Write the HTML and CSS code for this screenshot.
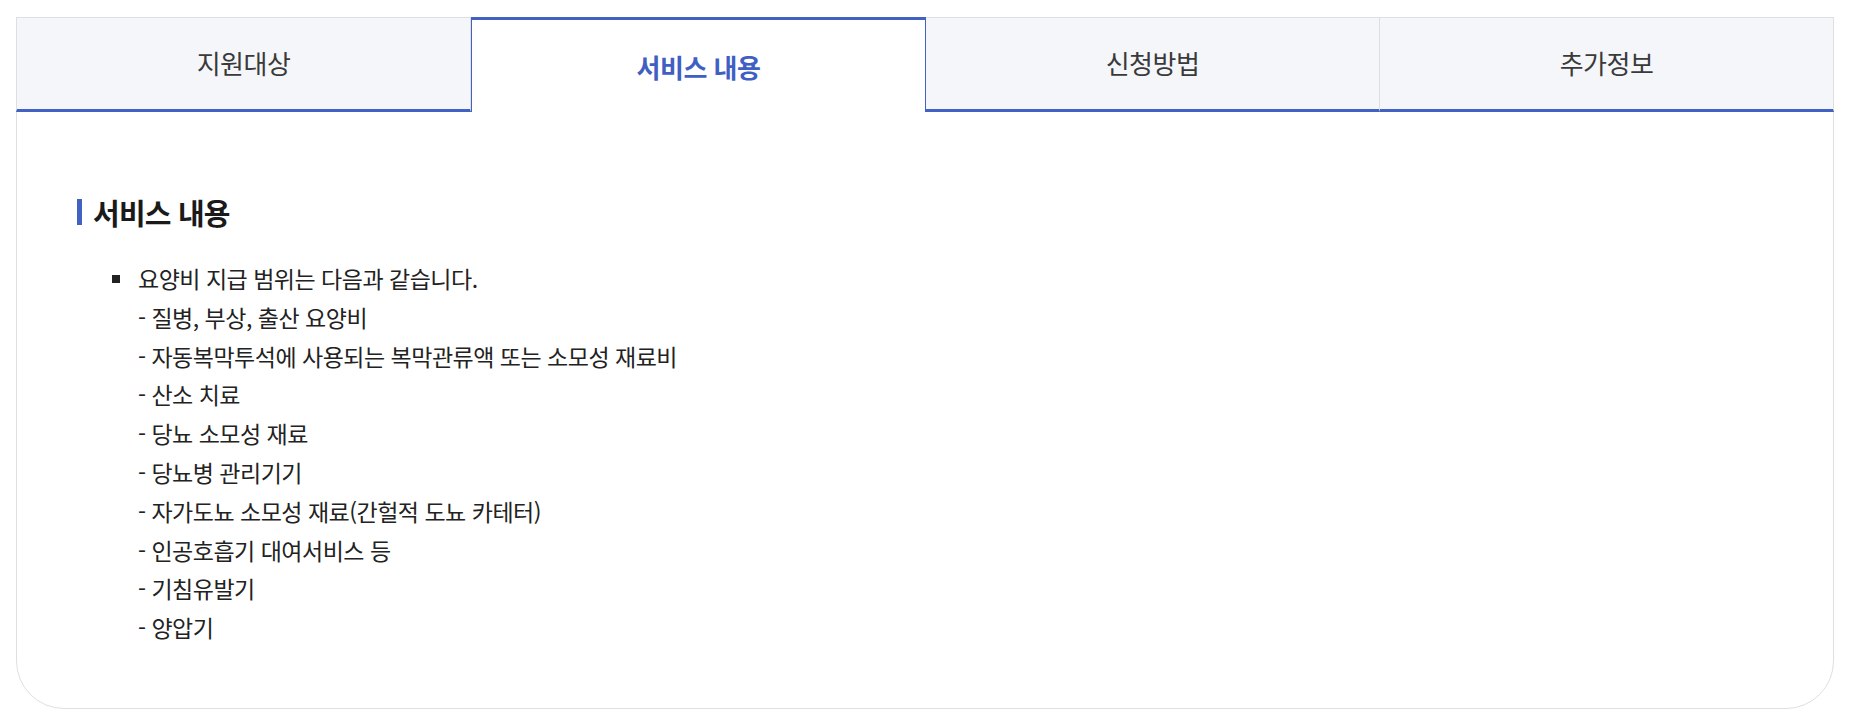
FILE: index.html
```html
<!DOCTYPE html>
<html lang="ko">
<head>
<meta charset="utf-8">
<title>서비스 내용</title>
<link rel="stylesheet" href="styles.css">
</head>
<body>
<div class="page">
  <div class="card">
    <div class="tabs">
      <div class="tab">지원대상</div>
      <div class="tab tab-active">서비스 내용</div>
      <div class="tab">신청방법</div>
      <div class="tab">추가정보</div>
    </div>
    <div class="content">
      <h2 class="section-title">서비스 내용</h2>
      <ul class="list">
        <li class="list-item">
          <span class="bullet"></span>
          <div class="item-text">
            <p class="line">요양비 지급 범위는 다음과 같습니다.</p>
            <p class="line">- 질병, 부상, 출산 요양비</p>
            <p class="line">- 자동복막투석에 사용되는 복막관류액 또는 소모성 재료비</p>
            <p class="line">- 산소 치료</p>
            <p class="line">- 당뇨 소모성 재료</p>
            <p class="line">- 당뇨병 관리기기</p>
            <p class="line">- 자가도뇨 소모성 재료(간헐적 도뇨 카테터)</p>
            <p class="line">- 인공호흡기 대여서비스 등</p>
            <p class="line">- 기침유발기</p>
            <p class="line">- 양압기</p>
          </div>
        </li>
      </ul>
    </div>
  </div>
</div>
</body>
</html>
```
FILE: styles.css
```css
* { box-sizing: border-box; }
html, body { margin: 0; padding: 0; background: #ffffff; }
body {
  font-family: "Noto Sans CJK KR", "Noto Sans", sans-serif;
  color: #222222;
}
.page {
  padding: 17px 18px 0 16px;
}
.card {
  width: 1818px;
  height: 692px;
  border: 1px solid #dedfe3;
  border-radius: 0 0 48px 48px;
  background: #ffffff;
  display: flex;
  flex-direction: column;
}
.tabs {
  display: flex;
  height: 95px;
  margin: -1px -1px 0 -1px;
}
.tab {
  flex: 1 1 0;
  display: flex;
  align-items: center;
  justify-content: center;
  background: #f5f6fa;
  border-top: 1px solid #dedfe3;
  border-right: 1px solid #dedfe3;
  border-bottom: 3px solid #4262c3;
  font-size: 26px;
  color: #3a3a3a;
  letter-spacing: -0.5px;
  padding-bottom: 2px;
}
.tab:first-child { border-left: 1px solid #dedfe3; }
.tab:last-child { border-right: 1px solid #dedfe3; }
.tab-active {
  background: #ffffff;
  border-top: 3px solid #4262c3;
  border-left: 1px solid #4262c3;
  border-right: 1px solid #4262c3;
  border-bottom: 0;
  color: #3f5fc4;
  font-weight: 700;
  padding-bottom: 0;
}
.tab-active + .tab { border-left: 0; }
.content {
  padding: 80px 60px 0 60px;
}
.section-title {
  margin: 0;
  display: flex;
  align-items: center;
  height: 40px;
  font-size: 29px;
  font-weight: 700;
  color: #1a1a1a;
  letter-spacing: -0.8px;
}
.section-title::before {
  content: "";
  display: block;
  width: 5px;
  height: 26px;
  background: #4262c3;
  margin-right: 11px;
}
.list {
  list-style: none;
  margin: 27px 0 0 0;
  padding: 0 0 0 35px;
}
.list-item {
  display: flex;
  align-items: flex-start;
}
.bullet {
  width: 8px;
  height: 8px;
  background: #222222;
  margin-top: 16px;
  margin-right: 18px;
  flex: none;
}
.line {
  margin: 0;
  font-size: 23px;
  line-height: 38.8px;
  letter-spacing: -0.5px;
  color: #222222;
}
```
